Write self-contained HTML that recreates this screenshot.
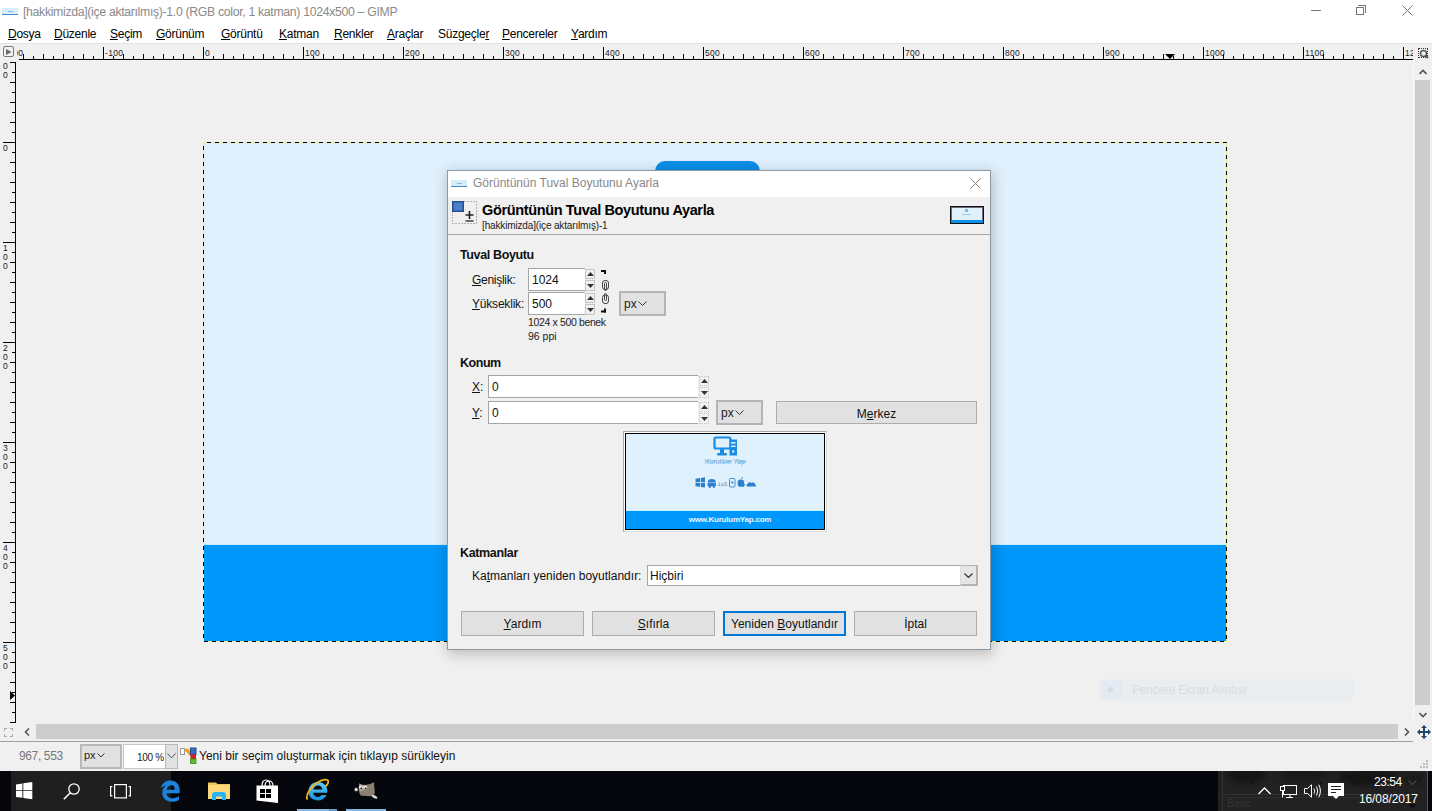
<!DOCTYPE html><html><head><meta charset="utf-8"><title>GIMP</title><style>
*{margin:0;padding:0;box-sizing:border-box}
html,body{width:1432px;height:811px;overflow:hidden;background:#f0f0f0;font-family:"Liberation Sans",sans-serif;color:#000}
.a{position:absolute}
.t{position:absolute;white-space:nowrap;line-height:1}
u{text-decoration:underline;text-decoration-thickness:1px;text-underline-offset:1px}
</style></head><body>
<div class="a" style="left:0;top:0;width:1432px;height:22px;background:#fff"></div>
<div class="a" style="left:2px;top:8px;width:16px;height:7px;background:#d6edfc"></div>
<div class="a" style="left:2px;top:14px;width:16px;height:1px;background:#3d8fd6"></div>
<div class="a" style="left:8px;top:11px;width:5px;height:1px;background:#8ab8dc"></div>
<div class="t" style="left:23px;top:6px;font-size:12.3px;letter-spacing:-0.335px;color:#8a8a8a">[hakkimizda](içe aktarılmış)-1.0 (RGB color, 1 katman) 1024x500 – GIMP</div>
<div class="a" style="left:1311px;top:10px;width:10px;height:1px;background:#777"></div>
<div class="a" style="left:1356px;top:7px;width:8px;height:8px;border:1px solid #777"></div>
<div class="a" style="left:1358px;top:5px;width:8px;height:8px;border-top:1px solid #777;border-right:1px solid #777"></div>
<svg class="a" style="left:1402px;top:5px" width="11" height="11"><path d="M0.5 0.5L10.5 10.5M10.5 0.5L0.5 10.5" stroke="#777" stroke-width="1"/></svg>
<div class="a" style="left:0;top:22px;width:1432px;height:22px;background:#fff"></div>
<div class="t" style="left:8px;top:28px;font-size:12px;letter-spacing:-0.25px"><u>D</u>osya</div>
<div class="t" style="left:54px;top:28px;font-size:12px;letter-spacing:-0.25px"><u>D</u>üzenle</div>
<div class="t" style="left:110px;top:28px;font-size:12px;letter-spacing:-0.25px"><u>S</u>eçim</div>
<div class="t" style="left:156px;top:28px;font-size:12px;letter-spacing:-0.25px"><u>G</u>örünüm</div>
<div class="t" style="left:221px;top:28px;font-size:12px;letter-spacing:-0.25px"><u>G</u>örüntü</div>
<div class="t" style="left:279px;top:28px;font-size:12px;letter-spacing:-0.25px"><u>K</u>atman</div>
<div class="t" style="left:334px;top:28px;font-size:12px;letter-spacing:-0.25px"><u>R</u>enkler</div>
<div class="t" style="left:387px;top:28px;font-size:12px;letter-spacing:-0.25px"><u>A</u>raçlar</div>
<div class="t" style="left:438px;top:28px;font-size:12px;letter-spacing:-0.25px">Süzgeçle<u>r</u></div>
<div class="t" style="left:502px;top:28px;font-size:12px;letter-spacing:-0.25px"><u>P</u>encereler</div>
<div class="t" style="left:571px;top:28px;font-size:12px;letter-spacing:-0.25px"><u>Y</u>ardım</div>
<div class="a" style="left:0;top:43px;width:1432px;height:1px;background:#e3e3e3"></div>
<div class="a" style="left:3px;top:46px;width:11px;height:11px;border:1px solid #777;border-radius:2px;background:#f2f2f2"></div>
<svg class="a" style="left:6px;top:49px" width="6" height="6"><path d="M0 0L5.5 3L0 6Z" fill="#666"/></svg>
<div class="a" style="left:17px;top:44px;width:1396px;height:16px;overflow:hidden"><div class="a" style="left:-34px;top:10px;width:1px;height:5px;background:#000"></div><div class="a" style="left:-24px;top:12px;width:1px;height:3px;background:#000"></div><div class="a" style="left:-14px;top:3px;width:1px;height:12px;background:#000"></div><div class="t" style="left:-12px;top:5px;font-size:8.5px;color:#1a1a1a;letter-spacing:0.3px">-200</div><div class="a" style="left:-4px;top:12px;width:1px;height:3px;background:#000"></div><div class="a" style="left:6px;top:10px;width:1px;height:5px;background:#000"></div><div class="a" style="left:16px;top:12px;width:1px;height:3px;background:#000"></div><div class="a" style="left:26px;top:10px;width:1px;height:5px;background:#000"></div><div class="a" style="left:36px;top:12px;width:1px;height:3px;background:#000"></div><div class="a" style="left:46px;top:10px;width:1px;height:5px;background:#000"></div><div class="a" style="left:56px;top:12px;width:1px;height:3px;background:#000"></div><div class="a" style="left:66px;top:10px;width:1px;height:5px;background:#000"></div><div class="a" style="left:76px;top:12px;width:1px;height:3px;background:#000"></div><div class="a" style="left:86px;top:3px;width:1px;height:12px;background:#000"></div><div class="t" style="left:88px;top:5px;font-size:8.5px;color:#1a1a1a;letter-spacing:0.3px">-100</div><div class="a" style="left:96px;top:12px;width:1px;height:3px;background:#000"></div><div class="a" style="left:106px;top:10px;width:1px;height:5px;background:#000"></div><div class="a" style="left:116px;top:12px;width:1px;height:3px;background:#000"></div><div class="a" style="left:126px;top:10px;width:1px;height:5px;background:#000"></div><div class="a" style="left:136px;top:12px;width:1px;height:3px;background:#000"></div><div class="a" style="left:146px;top:10px;width:1px;height:5px;background:#000"></div><div class="a" style="left:156px;top:12px;width:1px;height:3px;background:#000"></div><div class="a" style="left:166px;top:10px;width:1px;height:5px;background:#000"></div><div class="a" style="left:176px;top:12px;width:1px;height:3px;background:#000"></div><div class="a" style="left:186px;top:3px;width:1px;height:12px;background:#000"></div><div class="t" style="left:188px;top:5px;font-size:8.5px;color:#1a1a1a;letter-spacing:0.3px">0</div><div class="a" style="left:196px;top:12px;width:1px;height:3px;background:#000"></div><div class="a" style="left:206px;top:10px;width:1px;height:5px;background:#000"></div><div class="a" style="left:216px;top:12px;width:1px;height:3px;background:#000"></div><div class="a" style="left:226px;top:10px;width:1px;height:5px;background:#000"></div><div class="a" style="left:236px;top:12px;width:1px;height:3px;background:#000"></div><div class="a" style="left:246px;top:10px;width:1px;height:5px;background:#000"></div><div class="a" style="left:256px;top:12px;width:1px;height:3px;background:#000"></div><div class="a" style="left:266px;top:10px;width:1px;height:5px;background:#000"></div><div class="a" style="left:276px;top:12px;width:1px;height:3px;background:#000"></div><div class="a" style="left:286px;top:3px;width:1px;height:12px;background:#000"></div><div class="t" style="left:288px;top:5px;font-size:8.5px;color:#1a1a1a;letter-spacing:0.3px">100</div><div class="a" style="left:296px;top:12px;width:1px;height:3px;background:#000"></div><div class="a" style="left:306px;top:10px;width:1px;height:5px;background:#000"></div><div class="a" style="left:316px;top:12px;width:1px;height:3px;background:#000"></div><div class="a" style="left:326px;top:10px;width:1px;height:5px;background:#000"></div><div class="a" style="left:336px;top:12px;width:1px;height:3px;background:#000"></div><div class="a" style="left:346px;top:10px;width:1px;height:5px;background:#000"></div><div class="a" style="left:356px;top:12px;width:1px;height:3px;background:#000"></div><div class="a" style="left:366px;top:10px;width:1px;height:5px;background:#000"></div><div class="a" style="left:376px;top:12px;width:1px;height:3px;background:#000"></div><div class="a" style="left:386px;top:3px;width:1px;height:12px;background:#000"></div><div class="t" style="left:388px;top:5px;font-size:8.5px;color:#1a1a1a;letter-spacing:0.3px">200</div><div class="a" style="left:396px;top:12px;width:1px;height:3px;background:#000"></div><div class="a" style="left:406px;top:10px;width:1px;height:5px;background:#000"></div><div class="a" style="left:416px;top:12px;width:1px;height:3px;background:#000"></div><div class="a" style="left:426px;top:10px;width:1px;height:5px;background:#000"></div><div class="a" style="left:436px;top:12px;width:1px;height:3px;background:#000"></div><div class="a" style="left:446px;top:10px;width:1px;height:5px;background:#000"></div><div class="a" style="left:456px;top:12px;width:1px;height:3px;background:#000"></div><div class="a" style="left:466px;top:10px;width:1px;height:5px;background:#000"></div><div class="a" style="left:476px;top:12px;width:1px;height:3px;background:#000"></div><div class="a" style="left:486px;top:3px;width:1px;height:12px;background:#000"></div><div class="t" style="left:488px;top:5px;font-size:8.5px;color:#1a1a1a;letter-spacing:0.3px">300</div><div class="a" style="left:496px;top:12px;width:1px;height:3px;background:#000"></div><div class="a" style="left:506px;top:10px;width:1px;height:5px;background:#000"></div><div class="a" style="left:516px;top:12px;width:1px;height:3px;background:#000"></div><div class="a" style="left:526px;top:10px;width:1px;height:5px;background:#000"></div><div class="a" style="left:536px;top:12px;width:1px;height:3px;background:#000"></div><div class="a" style="left:546px;top:10px;width:1px;height:5px;background:#000"></div><div class="a" style="left:556px;top:12px;width:1px;height:3px;background:#000"></div><div class="a" style="left:566px;top:10px;width:1px;height:5px;background:#000"></div><div class="a" style="left:576px;top:12px;width:1px;height:3px;background:#000"></div><div class="a" style="left:586px;top:3px;width:1px;height:12px;background:#000"></div><div class="t" style="left:588px;top:5px;font-size:8.5px;color:#1a1a1a;letter-spacing:0.3px">400</div><div class="a" style="left:596px;top:12px;width:1px;height:3px;background:#000"></div><div class="a" style="left:606px;top:10px;width:1px;height:5px;background:#000"></div><div class="a" style="left:616px;top:12px;width:1px;height:3px;background:#000"></div><div class="a" style="left:626px;top:10px;width:1px;height:5px;background:#000"></div><div class="a" style="left:636px;top:12px;width:1px;height:3px;background:#000"></div><div class="a" style="left:646px;top:10px;width:1px;height:5px;background:#000"></div><div class="a" style="left:656px;top:12px;width:1px;height:3px;background:#000"></div><div class="a" style="left:666px;top:10px;width:1px;height:5px;background:#000"></div><div class="a" style="left:676px;top:12px;width:1px;height:3px;background:#000"></div><div class="a" style="left:686px;top:3px;width:1px;height:12px;background:#000"></div><div class="t" style="left:688px;top:5px;font-size:8.5px;color:#1a1a1a;letter-spacing:0.3px">500</div><div class="a" style="left:696px;top:12px;width:1px;height:3px;background:#000"></div><div class="a" style="left:706px;top:10px;width:1px;height:5px;background:#000"></div><div class="a" style="left:716px;top:12px;width:1px;height:3px;background:#000"></div><div class="a" style="left:726px;top:10px;width:1px;height:5px;background:#000"></div><div class="a" style="left:736px;top:12px;width:1px;height:3px;background:#000"></div><div class="a" style="left:746px;top:10px;width:1px;height:5px;background:#000"></div><div class="a" style="left:756px;top:12px;width:1px;height:3px;background:#000"></div><div class="a" style="left:766px;top:10px;width:1px;height:5px;background:#000"></div><div class="a" style="left:776px;top:12px;width:1px;height:3px;background:#000"></div><div class="a" style="left:786px;top:3px;width:1px;height:12px;background:#000"></div><div class="t" style="left:788px;top:5px;font-size:8.5px;color:#1a1a1a;letter-spacing:0.3px">600</div><div class="a" style="left:796px;top:12px;width:1px;height:3px;background:#000"></div><div class="a" style="left:806px;top:10px;width:1px;height:5px;background:#000"></div><div class="a" style="left:816px;top:12px;width:1px;height:3px;background:#000"></div><div class="a" style="left:826px;top:10px;width:1px;height:5px;background:#000"></div><div class="a" style="left:836px;top:12px;width:1px;height:3px;background:#000"></div><div class="a" style="left:846px;top:10px;width:1px;height:5px;background:#000"></div><div class="a" style="left:856px;top:12px;width:1px;height:3px;background:#000"></div><div class="a" style="left:866px;top:10px;width:1px;height:5px;background:#000"></div><div class="a" style="left:876px;top:12px;width:1px;height:3px;background:#000"></div><div class="a" style="left:886px;top:3px;width:1px;height:12px;background:#000"></div><div class="t" style="left:888px;top:5px;font-size:8.5px;color:#1a1a1a;letter-spacing:0.3px">700</div><div class="a" style="left:896px;top:12px;width:1px;height:3px;background:#000"></div><div class="a" style="left:906px;top:10px;width:1px;height:5px;background:#000"></div><div class="a" style="left:916px;top:12px;width:1px;height:3px;background:#000"></div><div class="a" style="left:926px;top:10px;width:1px;height:5px;background:#000"></div><div class="a" style="left:936px;top:12px;width:1px;height:3px;background:#000"></div><div class="a" style="left:946px;top:10px;width:1px;height:5px;background:#000"></div><div class="a" style="left:956px;top:12px;width:1px;height:3px;background:#000"></div><div class="a" style="left:966px;top:10px;width:1px;height:5px;background:#000"></div><div class="a" style="left:976px;top:12px;width:1px;height:3px;background:#000"></div><div class="a" style="left:986px;top:3px;width:1px;height:12px;background:#000"></div><div class="t" style="left:988px;top:5px;font-size:8.5px;color:#1a1a1a;letter-spacing:0.3px">800</div><div class="a" style="left:996px;top:12px;width:1px;height:3px;background:#000"></div><div class="a" style="left:1006px;top:10px;width:1px;height:5px;background:#000"></div><div class="a" style="left:1016px;top:12px;width:1px;height:3px;background:#000"></div><div class="a" style="left:1026px;top:10px;width:1px;height:5px;background:#000"></div><div class="a" style="left:1036px;top:12px;width:1px;height:3px;background:#000"></div><div class="a" style="left:1046px;top:10px;width:1px;height:5px;background:#000"></div><div class="a" style="left:1056px;top:12px;width:1px;height:3px;background:#000"></div><div class="a" style="left:1066px;top:10px;width:1px;height:5px;background:#000"></div><div class="a" style="left:1076px;top:12px;width:1px;height:3px;background:#000"></div><div class="a" style="left:1086px;top:3px;width:1px;height:12px;background:#000"></div><div class="t" style="left:1088px;top:5px;font-size:8.5px;color:#1a1a1a;letter-spacing:0.3px">900</div><div class="a" style="left:1096px;top:12px;width:1px;height:3px;background:#000"></div><div class="a" style="left:1106px;top:10px;width:1px;height:5px;background:#000"></div><div class="a" style="left:1116px;top:12px;width:1px;height:3px;background:#000"></div><div class="a" style="left:1126px;top:10px;width:1px;height:5px;background:#000"></div><div class="a" style="left:1136px;top:12px;width:1px;height:3px;background:#000"></div><div class="a" style="left:1146px;top:10px;width:1px;height:5px;background:#000"></div><div class="a" style="left:1156px;top:12px;width:1px;height:3px;background:#000"></div><div class="a" style="left:1166px;top:10px;width:1px;height:5px;background:#000"></div><div class="a" style="left:1176px;top:12px;width:1px;height:3px;background:#000"></div><div class="a" style="left:1186px;top:3px;width:1px;height:12px;background:#000"></div><div class="t" style="left:1188px;top:5px;font-size:8.5px;color:#1a1a1a;letter-spacing:0.3px">1000</div><div class="a" style="left:1196px;top:12px;width:1px;height:3px;background:#000"></div><div class="a" style="left:1206px;top:10px;width:1px;height:5px;background:#000"></div><div class="a" style="left:1216px;top:12px;width:1px;height:3px;background:#000"></div><div class="a" style="left:1226px;top:10px;width:1px;height:5px;background:#000"></div><div class="a" style="left:1236px;top:12px;width:1px;height:3px;background:#000"></div><div class="a" style="left:1246px;top:10px;width:1px;height:5px;background:#000"></div><div class="a" style="left:1256px;top:12px;width:1px;height:3px;background:#000"></div><div class="a" style="left:1266px;top:10px;width:1px;height:5px;background:#000"></div><div class="a" style="left:1276px;top:12px;width:1px;height:3px;background:#000"></div><div class="a" style="left:1286px;top:3px;width:1px;height:12px;background:#000"></div><div class="t" style="left:1288px;top:5px;font-size:8.5px;color:#1a1a1a;letter-spacing:0.3px">1100</div><div class="a" style="left:1296px;top:12px;width:1px;height:3px;background:#000"></div><div class="a" style="left:1306px;top:10px;width:1px;height:5px;background:#000"></div><div class="a" style="left:1316px;top:12px;width:1px;height:3px;background:#000"></div><div class="a" style="left:1326px;top:10px;width:1px;height:5px;background:#000"></div><div class="a" style="left:1336px;top:12px;width:1px;height:3px;background:#000"></div><div class="a" style="left:1346px;top:10px;width:1px;height:5px;background:#000"></div><div class="a" style="left:1356px;top:12px;width:1px;height:3px;background:#000"></div><div class="a" style="left:1366px;top:10px;width:1px;height:5px;background:#000"></div><div class="a" style="left:1376px;top:12px;width:1px;height:3px;background:#000"></div><div class="a" style="left:1386px;top:3px;width:1px;height:12px;background:#000"></div><div class="t" style="left:1388px;top:5px;font-size:8.5px;color:#1a1a1a;letter-spacing:0.3px">1200</div><div class="a" style="left:1396px;top:12px;width:1px;height:3px;background:#000"></div><div class="a" style="left:2px;top:15px;width:1394px;height:1px;background:#000"></div><svg class="a" style="left:1148px;top:10px" width="10" height="5"><path d="M0 0L10 0L5 5Z" fill="#000"/></svg></div>
<div class="a" style="left:0;top:60px;width:16px;height:663px;overflow:hidden"><div class="a" style="left:10px;top:-38px;width:5px;height:1px;background:#000"></div><div class="a" style="left:12px;top:-28px;width:3px;height:1px;background:#000"></div><div class="a" style="left:3px;top:-18px;width:12px;height:1px;background:#000"></div><div class="t" style="left:3px;top:-16px;font-size:8.5px;color:#1a1a1a">-</div><div class="t" style="left:3px;top:-7px;font-size:8.5px;color:#1a1a1a">1</div><div class="t" style="left:3px;top:2px;font-size:8.5px;color:#1a1a1a">0</div><div class="t" style="left:3px;top:11px;font-size:8.5px;color:#1a1a1a">0</div><div class="a" style="left:12px;top:-8px;width:3px;height:1px;background:#000"></div><div class="a" style="left:10px;top:2px;width:5px;height:1px;background:#000"></div><div class="a" style="left:12px;top:12px;width:3px;height:1px;background:#000"></div><div class="a" style="left:10px;top:22px;width:5px;height:1px;background:#000"></div><div class="a" style="left:12px;top:32px;width:3px;height:1px;background:#000"></div><div class="a" style="left:10px;top:42px;width:5px;height:1px;background:#000"></div><div class="a" style="left:12px;top:52px;width:3px;height:1px;background:#000"></div><div class="a" style="left:10px;top:62px;width:5px;height:1px;background:#000"></div><div class="a" style="left:12px;top:72px;width:3px;height:1px;background:#000"></div><div class="a" style="left:3px;top:82px;width:12px;height:1px;background:#000"></div><div class="t" style="left:3px;top:84px;font-size:8.5px;color:#1a1a1a">0</div><div class="a" style="left:12px;top:92px;width:3px;height:1px;background:#000"></div><div class="a" style="left:10px;top:102px;width:5px;height:1px;background:#000"></div><div class="a" style="left:12px;top:112px;width:3px;height:1px;background:#000"></div><div class="a" style="left:10px;top:122px;width:5px;height:1px;background:#000"></div><div class="a" style="left:12px;top:132px;width:3px;height:1px;background:#000"></div><div class="a" style="left:10px;top:142px;width:5px;height:1px;background:#000"></div><div class="a" style="left:12px;top:152px;width:3px;height:1px;background:#000"></div><div class="a" style="left:10px;top:162px;width:5px;height:1px;background:#000"></div><div class="a" style="left:12px;top:172px;width:3px;height:1px;background:#000"></div><div class="a" style="left:3px;top:182px;width:12px;height:1px;background:#000"></div><div class="t" style="left:3px;top:184px;font-size:8.5px;color:#1a1a1a">1</div><div class="t" style="left:3px;top:193px;font-size:8.5px;color:#1a1a1a">0</div><div class="t" style="left:3px;top:202px;font-size:8.5px;color:#1a1a1a">0</div><div class="a" style="left:12px;top:192px;width:3px;height:1px;background:#000"></div><div class="a" style="left:10px;top:202px;width:5px;height:1px;background:#000"></div><div class="a" style="left:12px;top:212px;width:3px;height:1px;background:#000"></div><div class="a" style="left:10px;top:222px;width:5px;height:1px;background:#000"></div><div class="a" style="left:12px;top:232px;width:3px;height:1px;background:#000"></div><div class="a" style="left:10px;top:242px;width:5px;height:1px;background:#000"></div><div class="a" style="left:12px;top:252px;width:3px;height:1px;background:#000"></div><div class="a" style="left:10px;top:262px;width:5px;height:1px;background:#000"></div><div class="a" style="left:12px;top:272px;width:3px;height:1px;background:#000"></div><div class="a" style="left:3px;top:282px;width:12px;height:1px;background:#000"></div><div class="t" style="left:3px;top:284px;font-size:8.5px;color:#1a1a1a">2</div><div class="t" style="left:3px;top:293px;font-size:8.5px;color:#1a1a1a">0</div><div class="t" style="left:3px;top:302px;font-size:8.5px;color:#1a1a1a">0</div><div class="a" style="left:12px;top:292px;width:3px;height:1px;background:#000"></div><div class="a" style="left:10px;top:302px;width:5px;height:1px;background:#000"></div><div class="a" style="left:12px;top:312px;width:3px;height:1px;background:#000"></div><div class="a" style="left:10px;top:322px;width:5px;height:1px;background:#000"></div><div class="a" style="left:12px;top:332px;width:3px;height:1px;background:#000"></div><div class="a" style="left:10px;top:342px;width:5px;height:1px;background:#000"></div><div class="a" style="left:12px;top:352px;width:3px;height:1px;background:#000"></div><div class="a" style="left:10px;top:362px;width:5px;height:1px;background:#000"></div><div class="a" style="left:12px;top:372px;width:3px;height:1px;background:#000"></div><div class="a" style="left:3px;top:382px;width:12px;height:1px;background:#000"></div><div class="t" style="left:3px;top:384px;font-size:8.5px;color:#1a1a1a">3</div><div class="t" style="left:3px;top:393px;font-size:8.5px;color:#1a1a1a">0</div><div class="t" style="left:3px;top:402px;font-size:8.5px;color:#1a1a1a">0</div><div class="a" style="left:12px;top:392px;width:3px;height:1px;background:#000"></div><div class="a" style="left:10px;top:402px;width:5px;height:1px;background:#000"></div><div class="a" style="left:12px;top:412px;width:3px;height:1px;background:#000"></div><div class="a" style="left:10px;top:422px;width:5px;height:1px;background:#000"></div><div class="a" style="left:12px;top:432px;width:3px;height:1px;background:#000"></div><div class="a" style="left:10px;top:442px;width:5px;height:1px;background:#000"></div><div class="a" style="left:12px;top:452px;width:3px;height:1px;background:#000"></div><div class="a" style="left:10px;top:462px;width:5px;height:1px;background:#000"></div><div class="a" style="left:12px;top:472px;width:3px;height:1px;background:#000"></div><div class="a" style="left:3px;top:482px;width:12px;height:1px;background:#000"></div><div class="t" style="left:3px;top:484px;font-size:8.5px;color:#1a1a1a">4</div><div class="t" style="left:3px;top:493px;font-size:8.5px;color:#1a1a1a">0</div><div class="t" style="left:3px;top:502px;font-size:8.5px;color:#1a1a1a">0</div><div class="a" style="left:12px;top:492px;width:3px;height:1px;background:#000"></div><div class="a" style="left:10px;top:502px;width:5px;height:1px;background:#000"></div><div class="a" style="left:12px;top:512px;width:3px;height:1px;background:#000"></div><div class="a" style="left:10px;top:522px;width:5px;height:1px;background:#000"></div><div class="a" style="left:12px;top:532px;width:3px;height:1px;background:#000"></div><div class="a" style="left:10px;top:542px;width:5px;height:1px;background:#000"></div><div class="a" style="left:12px;top:552px;width:3px;height:1px;background:#000"></div><div class="a" style="left:10px;top:562px;width:5px;height:1px;background:#000"></div><div class="a" style="left:12px;top:572px;width:3px;height:1px;background:#000"></div><div class="a" style="left:3px;top:582px;width:12px;height:1px;background:#000"></div><div class="t" style="left:3px;top:584px;font-size:8.5px;color:#1a1a1a">5</div><div class="t" style="left:3px;top:593px;font-size:8.5px;color:#1a1a1a">0</div><div class="t" style="left:3px;top:602px;font-size:8.5px;color:#1a1a1a">0</div><div class="a" style="left:12px;top:592px;width:3px;height:1px;background:#000"></div><div class="a" style="left:10px;top:602px;width:5px;height:1px;background:#000"></div><div class="a" style="left:12px;top:612px;width:3px;height:1px;background:#000"></div><div class="a" style="left:10px;top:622px;width:5px;height:1px;background:#000"></div><div class="a" style="left:12px;top:632px;width:3px;height:1px;background:#000"></div><div class="a" style="left:10px;top:642px;width:5px;height:1px;background:#000"></div><div class="a" style="left:12px;top:652px;width:3px;height:1px;background:#000"></div><div class="a" style="left:10px;top:662px;width:5px;height:1px;background:#000"></div><div class="a" style="left:15px;top:2px;width:1px;height:661px;background:#000"></div><svg class="a" style="left:10px;top:631px" width="5" height="9"><path d="M0 0L5 4.5L0 9Z" fill="#000"/></svg></div>
<div class="a" style="left:203px;top:142px;width:1024px;height:500px;background:#e0f1fd"></div>
<div class="a" style="left:203px;top:545px;width:1024px;height:96px;background:#0097fa"></div>
<div class="a" style="left:203px;top:544px;width:1024px;height:1px;background:#c8f0ff"></div>
<div class="a" style="left:655px;top:161px;width:105px;height:30px;background:#0c8fe8;border-radius:10px"></div>
<div class="a" style="left:203px;top:142px;width:1024px;height:1px;background:repeating-linear-gradient(90deg,#e9f08e 0 4px,#000 4px 8px)"></div>
<div class="a" style="left:203px;top:641px;width:1024px;height:1px;background:repeating-linear-gradient(90deg,#e9f08e 0 1px,#000 1px 5px,#e9f08e 5px 8px)"></div>
<div class="a" style="left:203px;top:142px;width:1px;height:500px;background:repeating-linear-gradient(180deg,#e9f08e 0 4px,#000 4px 8px)"></div>
<div class="a" style="left:1226px;top:142px;width:1px;height:500px;background:repeating-linear-gradient(180deg,#000 0 1px,#e9f08e 1px 5px,#000 5px 8px)"></div>
<div class="a" style="left:1100px;top:679px;width:253px;height:22px;background:#e9edf0"></div>
<div class="a" style="left:1101px;top:680px;width:21px;height:20px;background:#e3eaf2"></div>
<div class="a" style="left:1108px;top:687px;width:5px;height:5px;border-radius:50%;background:#d4dbe2"></div>
<div class="t" style="left:1132px;top:684px;font-size:12px;letter-spacing:-0.2px;color:#d9dcdf">Pencere Ekran Alıntısı</div>
<div class="a" style="left:1413px;top:60px;width:1px;height:663px;background:#fafafa"></div>
<div class="a" style="left:1415px;top:80px;width:15px;height:625px;background:#cdcdcd"></div>
<svg class="a" style="left:1419px;top:69px" width="8" height="6"><path d="M0.5 5L4 1.5L7.5 5" stroke="#555" stroke-width="1.6" fill="none"/></svg>
<svg class="a" style="left:1419px;top:712px" width="8" height="6"><path d="M0.5 1L4 4.5L7.5 1" stroke="#555" stroke-width="1.6" fill="none"/></svg>
<div class="a" style="left:1418px;top:48px;width:10px;height:10px;border:1px dotted #333"></div>
<svg class="a" style="left:1419px;top:49px" width="10" height="10"><circle cx="4.5" cy="4.5" r="3" fill="none" stroke="#555" stroke-width="1.5"/><path d="M6.5 6.5L9 9" stroke="#555" stroke-width="2"/></svg>
<div class="a" style="left:36px;top:724px;width:1362px;height:15px;background:#cdcdcd"></div>
<svg class="a" style="left:24px;top:728px" width="6" height="8"><path d="M5 0.5L1.5 4L5 7.5" stroke="#555" stroke-width="1.6" fill="none"/></svg>
<svg class="a" style="left:1404px;top:728px" width="6" height="8"><path d="M1 0.5L4.5 4L1 7.5" stroke="#555" stroke-width="1.6" fill="none"/></svg>
<div class="a" style="left:4px;top:728px;width:9px;height:9px;border:1px dashed #aaa"></div>
<svg class="a" style="left:1417px;top:725px" width="14" height="14"><path d="M7 0L10 3H8V6H11V4L14 7L11 10V8H8V11H10L7 14L4 11H6V8H3V10L0 7L3 4V6H6V3H4Z" fill="#24456f"/></svg>
<div class="a" style="left:0;top:741px;width:1413px;height:1px;background:#a0a0a0"></div>
<div class="t" style="left:19px;top:750px;font-size:12px;letter-spacing:-0.37px;color:#777">967, 553</div>
<div class="a" style="left:80px;top:744px;width:42px;height:25px;background:#e1e1e1;border:2px solid #b9b9b9"></div>
<div class="t" style="left:84px;top:750px;font-size:11px;color:#222">px</div>
<svg class="a" style="left:97px;top:753px" width="8" height="5"><path d="M0.5 0.5L4 4L7.5 0.5" stroke="#333" stroke-width="1" fill="none"/></svg>
<div class="a" style="left:123px;top:744px;width:55px;height:25px;background:#fff;border:1px solid #c8c8c8"></div>
<div class="a" style="left:165px;top:744px;width:13px;height:25px;background:#e1e1e1;border:1px solid #b9b9b9"></div>
<div class="t" style="left:137px;top:753px;font-size:10px;letter-spacing:-0.3px;color:#222">100 %</div>
<svg class="a" style="left:167px;top:753px" width="9" height="6"><path d="M0.5 0.5L4.5 5L8.5 0.5" stroke="#555" stroke-width="1" fill="none"/></svg>
<svg class="a" style="left:180px;top:747px" width="17" height="18"><rect x="0.5" y="1.5" width="4" height="6" fill="#fff" stroke="#999" stroke-width="1"/><path d="M4 2L8 1.5L13 7L11 10Z" fill="#f5a623"/><path d="M5 2.5L11.5 9" stroke="#e07b10" stroke-width="1"/><rect x="10.5" y="1" width="5.5" height="6.5" fill="#3a6cc0" stroke="#234a8a" stroke-width="1"/><rect x="10.5" y="7.5" width="5.5" height="4.5" fill="#d42020"/><rect x="10.5" y="12" width="5.5" height="4.5" fill="#5cc032" stroke="#3a8a20" stroke-width="0.8"/></svg>
<div class="t" style="left:199px;top:750px;font-size:12px;color:#111">Yeni bir seçim oluşturmak için tıklayıp sürükleyin</div>
<div class="a" style="left:1426px;top:760px;width:2px;height:2px;background:#bbb"></div>
<div class="a" style="left:1423px;top:763px;width:2px;height:2px;background:#bbb"></div>
<div class="a" style="left:1426px;top:763px;width:2px;height:2px;background:#bbb"></div>
<div class="a" style="left:1420px;top:766px;width:2px;height:2px;background:#bbb"></div>
<div class="a" style="left:1423px;top:766px;width:2px;height:2px;background:#bbb"></div>
<div class="a" style="left:1426px;top:766px;width:2px;height:2px;background:#bbb"></div>
<div class="a" style="left:447px;top:170px;width:544px;height:480px;box-shadow:1px 3px 13px 1px rgba(0,0,0,0.22)"></div>
<div class="a" style="left:447px;top:170px;width:544px;height:480px;background:#f0f0f0;border:1px solid #8c98a2"></div>
<div class="a" style="left:448px;top:171px;width:542px;height:26px;background:#fff"></div>
<div class="a" style="left:451px;top:180px;width:16px;height:6px;background:#d6edfc"></div>
<div class="a" style="left:451px;top:186px;width:16px;height:1px;background:#3d8fd6"></div>
<div class="a" style="left:457px;top:183px;width:5px;height:1px;background:#8ab8dc"></div>
<div class="t" style="left:473px;top:177px;font-size:12px;color:#888">Görüntünün Tuval Boyutunu Ayarla</div>
<svg class="a" style="left:970px;top:178px" width="11" height="11"><path d="M0.5 0.5L10.5 10.5M10.5 0.5L0.5 10.5" stroke="#808080" stroke-width="1"/></svg>
<div class="a" style="left:448px;top:234px;width:542px;height:1px;background:#a5a5a5"></div>
<svg class="a" style="left:451px;top:200px" width="27" height="25"><rect x="1.5" y="1.5" width="24" height="22" fill="none" stroke="#777" stroke-width="1" stroke-dasharray="1 2"/><rect x="1" y="1" width="12" height="11" fill="#244f96"/><rect x="2.5" y="2.5" width="9" height="8" fill="#4d7fc8"/><path d="M14.5 15H22.5M18.5 11V19" stroke="#222" stroke-width="1.6"/><path d="M14.5 21H22.5" stroke="#333" stroke-width="1.4"/></svg>
<div class="t" style="left:482px;top:203px;font-size:14.5px;letter-spacing:-0.36px;font-weight:bold">Görüntünün Tuval Boyutunu Ayarla</div>
<div class="t" style="left:482px;top:221px;font-size:10px;letter-spacing:-0.15px;color:#222">[hakkimizda](içe aktarılmış)-1</div>
<div class="a" style="left:950px;top:206px;width:34px;height:18px;border:1px solid #111;box-shadow:inset 0 0 0 1px #6a6a7a;background:#dff1fd"></div>
<div class="a" style="left:951px;top:220px;width:32px;height:3px;background:#0e8ee6"></div>
<div class="a" style="left:965px;top:209px;width:3px;height:3px;background:#7ab8ec"></div>
<div class="a" style="left:962px;top:214px;width:9px;height:1px;background:#a8c8e0"></div>
<div class="t" style="left:460px;top:249px;font-size:12.5px;letter-spacing:-0.37px;font-weight:bold;color:#111">Tuval Boyutu</div>
<div class="t" style="left:472px;top:274px;font-size:12px;letter-spacing:-0.28px;color:#111"><u>G</u>enişlik:</div>
<div class="t" style="left:472px;top:298px;font-size:12px;letter-spacing:-0.2px;color:#111"><u>Y</u>ükseklik:</div>
<div class="a" style="left:528px;top:268px;width:57px;height:23px;background:#fff;border:1px solid #a5a5a5;border-right:none"></div>
<div class="t" style="left:532px;top:274px;font-size:12px;letter-spacing:0px;color:#111">1024</div>
<div class="a" style="left:528px;top:292px;width:57px;height:23px;background:#fff;border:1px solid #a5a5a5;border-right:none"></div>
<div class="t" style="left:532px;top:298px;font-size:12px;letter-spacing:0px;color:#111">500</div>
<div class="a" style="left:585px;top:269px;width:10px;height:10px;border:1px solid #c4c4c4;background:#f0f0f0"></div>
<div class="a" style="left:585px;top:280px;width:10px;height:11px;border:1px solid #c4c4c4;background:#f0f0f0"></div>
<svg class="a" style="left:587px;top:272px" width="7" height="4"><path d="M0 4L3.5 0L7 4Z" fill="#333"/></svg>
<svg class="a" style="left:587px;top:284px" width="7" height="4"><path d="M0 0L3.5 4L7 0Z" fill="#333"/></svg>
<div class="a" style="left:585px;top:293px;width:10px;height:10px;border:1px solid #c4c4c4;background:#f0f0f0"></div>
<div class="a" style="left:585px;top:304px;width:10px;height:11px;border:1px solid #c4c4c4;background:#f0f0f0"></div>
<svg class="a" style="left:587px;top:296px" width="7" height="4"><path d="M0 4L3.5 0L7 4Z" fill="#333"/></svg>
<svg class="a" style="left:587px;top:308px" width="7" height="4"><path d="M0 0L3.5 4L7 0Z" fill="#333"/></svg>
<svg class="a" style="left:600px;top:268px" width="10" height="47"><rect x="1" y="2" width="5" height="2" fill="#111"/><rect x="4" y="2" width="2" height="4" fill="#111"/><rect x="2.5" y="12.5" width="6" height="9" rx="2.5" fill="none" stroke="#444" stroke-width="1"/><rect x="4.5" y="14.5" width="2" height="8" rx="1" fill="none" stroke="#444" stroke-width="1"/><rect x="2.5" y="27" width="6" height="8.5" rx="2.5" fill="none" stroke="#444" stroke-width="1"/><rect x="4.5" y="25.5" width="2" height="7" rx="1" fill="none" stroke="#444" stroke-width="1"/><rect x="1" y="42.5" width="5" height="2" fill="#111"/><rect x="4" y="40.5" width="2" height="4" fill="#111"/></svg>
<div class="a" style="left:619px;top:291px;width:47px;height:25px;background:#e1e1e1;border:2px solid #b4b4b4"></div>
<div class="t" style="left:624px;top:298px;font-size:12px;letter-spacing:0px;color:#222">px</div>
<svg class="a" style="left:638px;top:301px" width="9" height="5"><path d="M0.5 0.5L4.5 4.5L8.5 0.5" stroke="#333" stroke-width="1" fill="none"/></svg>
<div class="t" style="left:528px;top:317px;font-size:10.5px;letter-spacing:-0.36px;color:#222">1024 x 500 benek</div>
<div class="t" style="left:528px;top:331px;font-size:10.5px;letter-spacing:0px;color:#222">96 ppi</div>
<div class="t" style="left:460px;top:357px;font-size:12.5px;letter-spacing:-0.46px;font-weight:bold;color:#111">Konum</div>
<div class="t" style="left:472px;top:381px;font-size:12px;letter-spacing:0px;color:#111"><u>X</u>:</div>
<div class="t" style="left:472px;top:407px;font-size:12px;letter-spacing:0px;color:#111"><u>Y</u>:</div>
<div class="a" style="left:488px;top:375px;width:210px;height:23px;background:#fff;border:1px solid #a5a5a5;border-right:none"></div>
<div class="t" style="left:492px;top:381px;font-size:12px;letter-spacing:0px;color:#111">0</div>
<div class="a" style="left:488px;top:401px;width:210px;height:23px;background:#fff;border:1px solid #a5a5a5;border-right:none"></div>
<div class="t" style="left:492px;top:407px;font-size:12px;letter-spacing:0px;color:#111">0</div>
<div class="a" style="left:699px;top:376px;width:10px;height:10px;border:1px dotted #c4c4c4;background:#f0f0f0"></div>
<div class="a" style="left:699px;top:387px;width:10px;height:11px;border:1px dotted #c4c4c4;background:#f0f0f0"></div>
<svg class="a" style="left:701px;top:379px" width="7" height="4"><path d="M0 4L3.5 0L7 4Z" fill="#333"/></svg>
<svg class="a" style="left:701px;top:391px" width="7" height="4"><path d="M0 0L3.5 4L7 0Z" fill="#333"/></svg>
<div class="a" style="left:699px;top:402px;width:10px;height:10px;border:1px dotted #c4c4c4;background:#f0f0f0"></div>
<div class="a" style="left:699px;top:413px;width:10px;height:11px;border:1px dotted #c4c4c4;background:#f0f0f0"></div>
<svg class="a" style="left:701px;top:405px" width="7" height="4"><path d="M0 4L3.5 0L7 4Z" fill="#333"/></svg>
<svg class="a" style="left:701px;top:417px" width="7" height="4"><path d="M0 0L3.5 4L7 0Z" fill="#333"/></svg>
<div class="a" style="left:716px;top:400px;width:47px;height:25px;background:#e1e1e1;border:2px solid #b4b4b4"></div>
<div class="t" style="left:721px;top:407px;font-size:12px;letter-spacing:0px;color:#222">px</div>
<svg class="a" style="left:735px;top:410px" width="9" height="5"><path d="M0.5 0.5L4.5 4.5L8.5 0.5" stroke="#333" stroke-width="1" fill="none"/></svg>
<div class="a" style="left:776px;top:401px;width:201px;height:23px;background:#e1e1e1;border:1px solid #adadad"></div>
<div class="t" style="left:776px;top:408px;width:201px;text-align:center;font-size:12px;color:#111">M<u>e</u>rkez</div>
<div class="a" style="left:623px;top:431px;width:204px;height:101px;border:1px solid #a8a8a8;border-right-color:#ddd;border-bottom-color:#ddd;background:#fff"></div>
<div class="a" style="left:625px;top:433px;width:200px;height:97px;border:1px solid #000;background:#dff1fd"></div>
<div class="a" style="left:626px;top:510px;width:198px;height:1px;background:#c4f2ff"></div>
<div class="a" style="left:626px;top:511px;width:198px;height:18px;background:#0097fa"></div>
<div class="t" style="left:632px;top:516px;width:196px;text-align:center;font-size:8px;letter-spacing:-0.22px;font-weight:bold;color:#e8f6ff">www.KurulumYap.com</div>
<div class="t" style="left:627px;top:459px;width:196px;text-align:center;font-size:6.5px;color:#6ab0e8;letter-spacing:0.3px">Kurulum Yap</div>
<svg class="a" style="left:712px;top:435px" width="26" height="22"><rect x="2.5" y="2.5" width="16" height="11" rx="1.5" fill="none" stroke="#1a8ce6" stroke-width="2.2"/><rect x="8" y="14" width="4" height="4" fill="#1a8ce6"/><rect x="5" y="18" width="10" height="2.5" rx="1" fill="#1a8ce6"/><rect x="17.5" y="4.5" width="7.5" height="16" fill="#1a8ce6"/><rect x="19" y="7" width="4.5" height="1.6" fill="#dff1fd"/><rect x="19" y="10.5" width="4.5" height="1.6" fill="#dff1fd"/><circle cx="21.2" cy="16.5" r="1.2" fill="#dff1fd"/></svg>
<div class="t" style="left:707px;top:459px;font-family:'Liberation Mono',monospace;font-size:6px;color:#7eaad2;letter-spacing:-0.05px">Kurulum Yap</div>
<svg class="a" style="left:693px;top:476px" width="66" height="12"><path d="M2.5 2.7L7 2V6H2.5Z M7.8 1.9L12 1.2V6H7.8Z M2.5 6.8H7V10.8L2.5 10.2Z M7.8 6.8H12V11.6L7.8 11Z" fill="#2f7fd0"/><path d="M14.5 6.5A4.3 4 0 0 1 23 6.5Z" fill="#2f7fd0"/><rect x="14.5" y="7" width="8.5" height="3.5" rx="1" fill="#2f7fd0"/><rect x="16" y="10" width="1.6" height="2" fill="#2f7fd0"/><rect x="20" y="10" width="1.6" height="2" fill="#2f7fd0"/><text x="24.5" y="10" font-size="5.5" fill="#5a8ec4" font-family="Liberation Mono">ioS</text><rect x="36.5" y="2.5" width="5.5" height="8.5" rx="1" fill="none" stroke="#4c8ad0" stroke-width="1"/><rect x="38.3" y="5.5" width="2" height="2" fill="#4c8ad0"/><path d="M48 3.5C46 3 44.5 4.5 44.5 7C44.5 9.5 46 11 47 11C47.8 11 48 10.6 48.5 10.6C49 10.6 49.3 11 50 11C51 11 52 9 52 8.5C51 8 50.6 7 51.2 5.6C50.6 4.2 49.3 3.2 48 3.5Z M48.3 3C48.3 2 49 1 50 1C50 2 49.3 3 48.3 3Z" fill="#2f7fd0"/><path d="M54.5 10.5C53 10.5 53 8 54.8 8C55 6 57.5 5.5 58.5 7C59.5 6 62 6.5 62 8.5C63.5 8.5 63.5 10.5 62 10.5Z" fill="#2f7fd0"/></svg>
<div class="t" style="left:460px;top:547px;font-size:12.5px;letter-spacing:-0.36px;font-weight:bold;color:#111">Katmanlar</div>
<div class="t" style="left:472px;top:570px;font-size:12px;letter-spacing:0px;color:#111">Ka<u>t</u>manları yeniden boyutlandır:</div>
<div class="a" style="left:647px;top:565px;width:331px;height:21px;background:#fff;border:1px solid #a5a5a5"></div>
<div class="a" style="left:960px;top:565px;width:18px;height:21px;background:#e6e6e6;border:2px solid #b4b4b4;border-left:1px solid #dcdcdc;border-top:1px solid #b4b4b4"></div>
<svg class="a" style="left:964px;top:573px" width="9" height="5"><path d="M0.5 0.5L4.5 4.5L8.5 0.5" stroke="#333" stroke-width="1.2" fill="none"/></svg>
<div class="t" style="left:650px;top:570px;font-size:12px;letter-spacing:0px;color:#111">Hiçbiri</div>
<div class="a" style="left:461px;top:611px;width:123px;height:25px;background:#e1e1e1;border:1px solid #adadad"></div>
<div class="t" style="left:461px;top:618px;width:123px;text-align:center;font-size:12px;color:#111"><u>Y</u>ardım</div>
<div class="a" style="left:592px;top:611px;width:123px;height:25px;background:#e1e1e1;border:1px solid #adadad"></div>
<div class="t" style="left:592px;top:618px;width:123px;text-align:center;font-size:12px;color:#111"><u>S</u>ıfırla</div>
<div class="a" style="left:723px;top:611px;width:123px;height:25px;background:#e1e1e1;border:2px solid #0078d7"></div>
<div class="t" style="left:723px;top:618px;width:123px;text-align:center;font-size:12px;color:#111">Yeniden <u>B</u>oyutlandır</div>
<div class="a" style="left:854px;top:611px;width:123px;height:25px;background:#e1e1e1;border:1px solid #adadad"></div>
<div class="t" style="left:854px;top:618px;width:123px;text-align:center;font-size:12px;color:#111">İptal</div>
<div class="a" style="left:0;top:771px;width:1432px;height:40px;background:#05070c"></div>
<div class="a" style="left:11px;top:771px;width:160px;height:40px;background:#1f1f1f"></div>
<svg class="a" style="left:16px;top:782px" width="17" height="18"><path d="M0 2.4L6.4 1.5V8.2H0Z M7.3 1.35L16.3 0.1V8.2H7.3Z M0 9.1H6.4V15.8L0 14.9Z M7.3 9.1H16.3V17.2L7.3 15.95Z" fill="#fff"/></svg>
<svg class="a" style="left:63px;top:783px" width="18" height="17"><circle cx="11" cy="6" r="5.2" fill="none" stroke="#fff" stroke-width="1.3"/><path d="M7.3 9.7L0.8 16.2" stroke="#fff" stroke-width="1.5"/></svg>
<svg class="a" style="left:110px;top:784px" width="21" height="15"><rect x="4.6" y="0.6" width="11.8" height="13.3" fill="none" stroke="#fff" stroke-width="1.2"/><path d="M2.4 2.6H0.6V11.9H2.4 M18.6 2.6H20.4V11.9H18.6" fill="none" stroke="#fff" stroke-width="1.2"/></svg>
<svg class="a" style="left:160px;top:780px" width="21" height="22"><path d="M0.5 8.5C2 3 6 0.5 10.5 0.5C16 0.5 19.7 4.5 19.7 10V13.2H6.5C6.8 16.5 9.5 18.2 12.5 18.2C15 18.2 17.2 17.3 19 16V20C17 21.2 14.5 21.8 12 21.8C6 21.8 2.3 18 2.3 12.5C2.3 9.5 3.8 6.8 6.2 5.6C3.8 6 1.8 7 0.5 8.5Z M6.8 9.8C7 7 9 5.3 11.5 5.3C13.8 5.3 14.7 7 14.7 9.8Z" fill="#1e82dc" fill-rule="evenodd"/></svg>
<svg class="a" style="left:208px;top:782px" width="22" height="18"><path d="M0 0.5H8L9.5 2H22V17H0Z" fill="#f2c55c"/><rect x="0" y="3" width="22" height="14" fill="#fbd97a"/><path d="M4 18V13C4 11 5 10 7 10H15C17 10 18 11 18 13V18H14V14.5H8V18Z" fill="#2ab2ee"/></svg>
<svg class="a" style="left:256px;top:779px" width="24" height="25"><path d="M6 7C6 2.5 7.5 1 10 1C12.5 1 14 2.5 14 7M9 7C9 3.5 10.5 2 13 2C15.5 2 17 3.5 17 7" fill="none" stroke="#fff" stroke-width="1.2"/><path d="M0.5 6.5H22V24L0.5 21.5Z" fill="#fff"/><rect x="4" y="10" width="5" height="4" fill="#000"/><rect x="10" y="10" width="5" height="4" fill="#000"/><rect x="4" y="15" width="5" height="4" fill="#000"/><rect x="10" y="15" width="5" height="4" fill="#000"/></svg>
<svg class="a" style="left:305px;top:778px" width="24" height="24"><defs><linearGradient id="ieg" x1="0" y1="0" x2="0" y2="1"><stop offset="0" stop-color="#5cd0f5"/><stop offset="1" stop-color="#1b8fe0"/></linearGradient></defs><path d="M13 4C7.5 4 3.5 8 3.5 13.5C3.5 19 7.5 22.5 13 22.5C16.8 22.5 20 20.5 21.5 17H16.5C15.6 18.3 14.5 19 13 19C10.4 19 8.5 17.2 8.3 14.8H22.3C22.4 14.3 22.4 13.8 22.4 13.3C22.4 8 18.5 4 13 4Z M8.5 11.5C8.9 9 10.7 7.5 13 7.5C15.3 7.5 17 9 17.4 11.5Z" fill="url(#ieg)" fill-rule="evenodd"/><path d="M2.5 21.5C0 18 5 9.5 12 4.8C18 1 22.5 0.8 23.2 2.8C23.7 4.2 22.5 6.5 20.5 8.5" fill="none" stroke="#f0b520" stroke-width="1.8"/></svg>
<div class="a" style="left:297px;top:809px;width:32px;height:2px;background:#88b6e2"></div>
<div class="a" style="left:329px;top:809px;width:8px;height:2px;background:#6d98c4"></div>
<svg class="a" style="left:354px;top:780px" width="26" height="20"><circle cx="2.2" cy="9.8" r="2.7" fill="#2a2a2a"/><circle cx="2.2" cy="9.6" r="1.5" fill="#f4f4f4"/><path d="M5 3.5Q12 7 20 2.2L20.8 13Q19.5 16 17 16.2L7.5 15.8Q5 14.5 5 10Z" fill="#8a806e"/><path d="M5 3.5Q8 5.5 12 5.5L11 10L6 12Z" fill="#b0a898" opacity="0.6"/><circle cx="6.8" cy="7.3" r="1.9" fill="#f0f0f0"/><circle cx="11.2" cy="7.3" r="1.9" fill="#f0f0f0"/><circle cx="7.2" cy="8.2" r="0.9" fill="#222"/><circle cx="11.6" cy="8.2" r="0.9" fill="#222"/><ellipse cx="20.5" cy="16.8" rx="3.2" ry="1.4" transform="rotate(28 20.5 16.8)" fill="#d8d8d8"/></svg>
<div class="a" style="left:346px;top:809px;width:40px;height:2px;background:#86b4e0"></div>
<div class="a" style="left:1218px;top:771px;width:210px;height:40px;background:#222"></div>
<div class="a" style="left:1218px;top:771px;width:210px;height:22px;overflow:hidden"><div class="a" style="left:8px;top:-6px;width:40px;height:18px;border-radius:50%;background:#151515;filter:blur(3px)"></div><div class="a" style="left:60px;top:-4px;width:50px;height:14px;border-radius:50%;background:#191919;filter:blur(3px)"></div><div class="a" style="left:120px;top:-2px;width:60px;height:16px;border-radius:50%;background:#141414;filter:blur(3px)"></div><div class="a" style="left:185px;top:2px;width:20px;height:12px;border-radius:50%;background:#1a1a1a;filter:blur(2px)"></div></div>
<div class="a" style="left:1222px;top:771px;width:1px;height:40px;background:#333"></div>
<div class="t" style="left:1250px;top:780px;font-size:9px;color:#0c0c0c">+</div>
<div class="t" style="left:1318px;top:780px;font-size:9px;color:#0c0c0c">+</div>
<div class="t" style="left:1352px;top:780px;font-size:9px;color:#0c0c0c">+</div>
<svg class="a" style="left:1408px;top:780px" width="9" height="5"><path d="M0.5 0.5L4.5 4.5L8.5 0.5" stroke="#444" stroke-width="1.2" fill="none"/></svg>
<svg class="a" style="left:1408px;top:804px" width="9" height="5"><path d="M0 0H9L4.5 5Z" fill="#111"/></svg>
<div class="a" style="left:1222px;top:794px;width:190px;height:1px;background:#333"></div>
<div class="a" style="left:1222px;top:797px;width:190px;height:1px;background:#2d2d2d"></div>
<div class="t" style="left:1227px;top:799px;font-size:10px;letter-spacing:-0.2px;color:#363636">Basic</div>
<svg class="a" style="left:1258px;top:787px" width="13" height="8"><path d="M0.5 7L6.5 1L12.5 7" fill="none" stroke="#fff" stroke-width="1.3"/></svg>
<svg class="a" style="left:1280px;top:785px" width="17" height="13"><rect x="3.5" y="0.5" width="13" height="9" fill="none" stroke="#fff" stroke-width="1"/><rect x="0.5" y="1.5" width="4" height="4" fill="#222" stroke="#fff" stroke-width="1"/><path d="M2.5 5.5V12.5M6 12.5H13M10 9.5V12.5" stroke="#fff" stroke-width="1"/></svg>
<svg class="a" style="left:1304px;top:784px" width="17" height="14"><path d="M0.5 4.5H3.5L7.5 0.8V13.2L3.5 9.5H0.5Z" fill="none" stroke="#fff" stroke-width="1"/><path d="M10 4.5Q11.5 7 10 9.5M12.5 2.5Q15 7 12.5 11.5M14.8 0.8Q18 7 14.8 13.2" fill="none" stroke="#fff" stroke-width="1"/></svg>
<svg class="a" style="left:1328px;top:783px" width="16" height="16"><path d="M0 0H16V13H11L8 16L5 13H0Z" fill="#fff"/><path d="M3 3.5H13M3 6.5H13M3 9.5H8" stroke="#222" stroke-width="1"/></svg>
<div class="t" style="left:1374px;top:776px;font-size:12px;letter-spacing:-0.48px;color:#fff">23:54</div>
<div class="t" style="left:1359px;top:793px;font-size:12px;letter-spacing:-0.12px;color:#fff">16/08/2017</div>
<div class="a" style="left:1427px;top:771px;width:1px;height:40px;background:#555"></div>
</body></html>
